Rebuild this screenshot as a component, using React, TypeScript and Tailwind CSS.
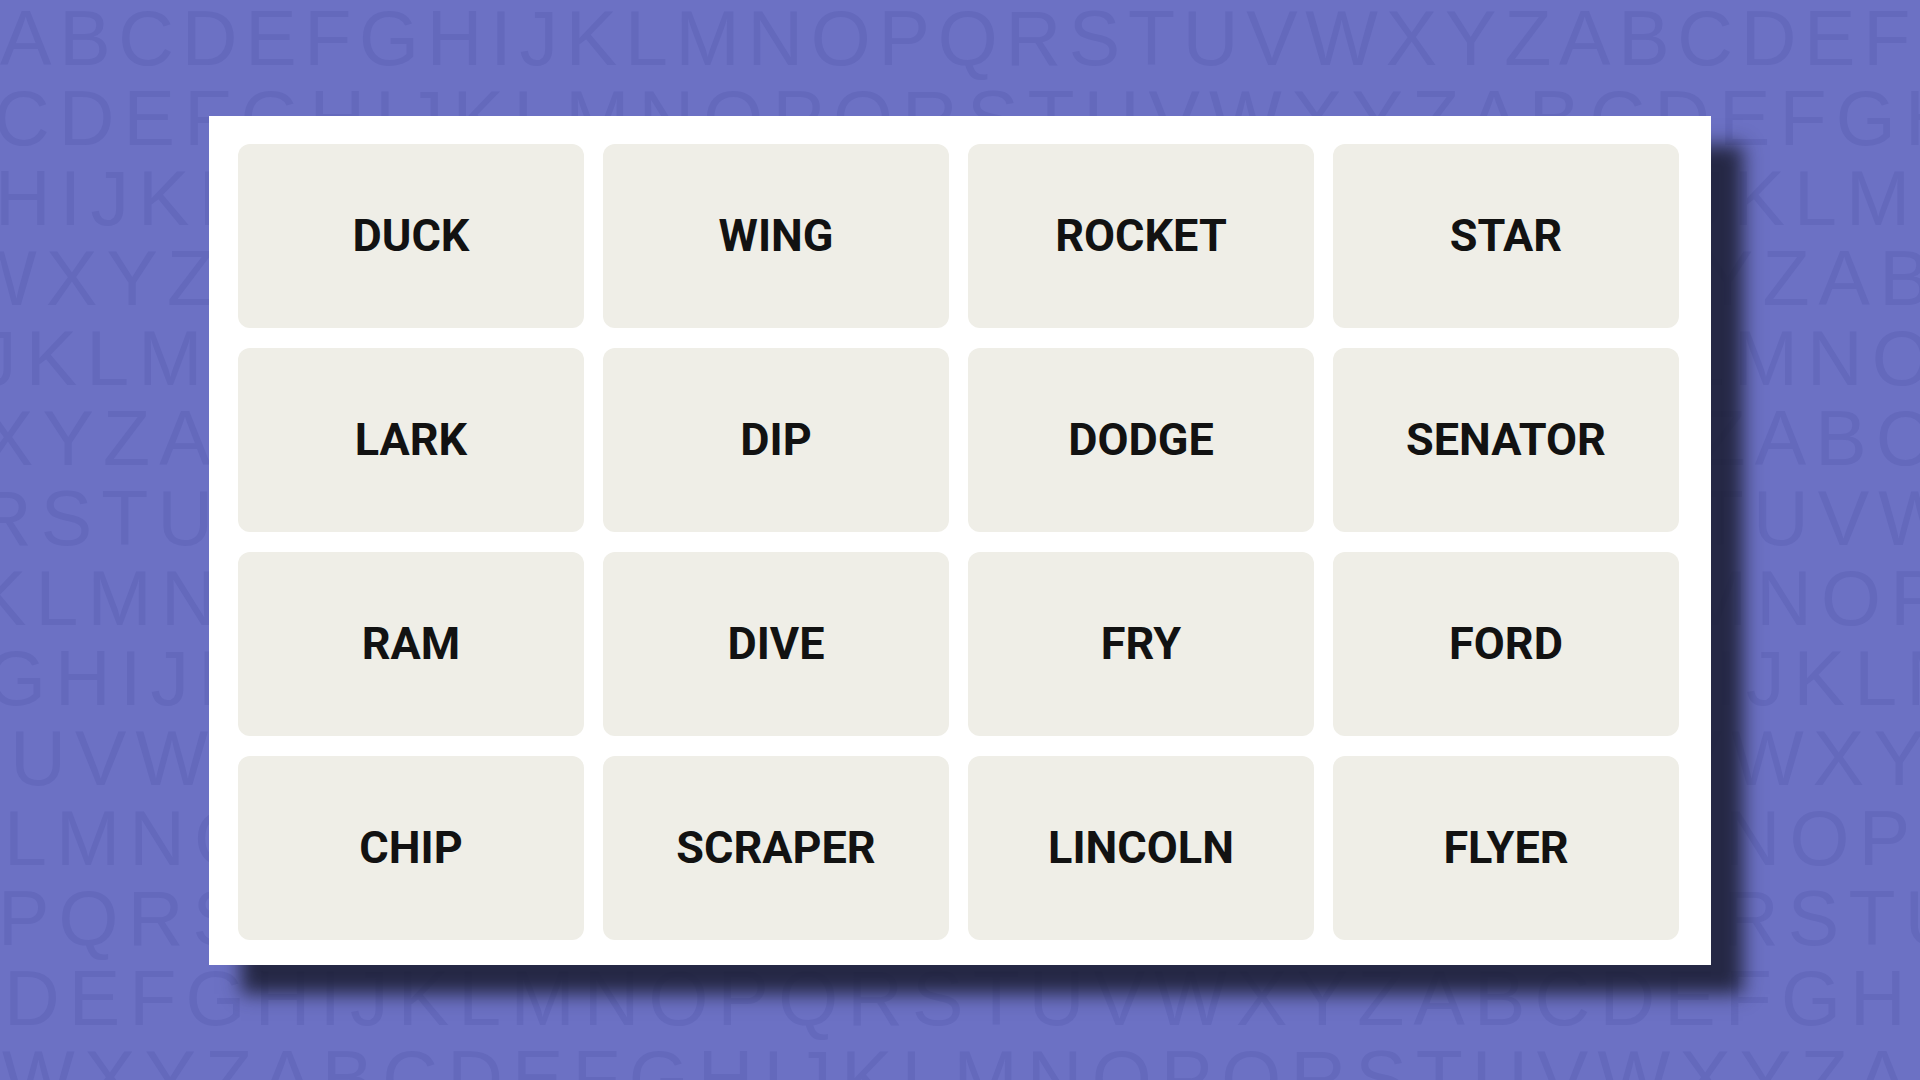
import React from "react";

const ALPHABET = "ABCDEFGHIJKLMNOPQRSTUVWXYZ";

// Background rows: starting letter and horizontal offset
const rows: { start: string; cls: string }[] = [
  { start: "A", cls: "ml-[0px] tracking-[7.8px]" },
  { start: "C", cls: "ml-[-6px] tracking-[9.2px]" },
  { start: "H", cls: "ml-[-5px] tracking-[9.2px]" },
  { start: "W", cls: "ml-[-36px] tracking-[9.2px]" },
  { start: "J", cls: "ml-[-22px] tracking-[9.2px]" },
  { start: "X", cls: "ml-[-18px] tracking-[9.2px]" },
  { start: "R", cls: "ml-[-24px] tracking-[9.2px]" },
  { start: "K", cls: "ml-[-25px] tracking-[9.2px]" },
  { start: "G", cls: "ml-[-14px] tracking-[9.2px]" },
  { start: "T", cls: "ml-[-46px] tracking-[9.2px]" },
  { start: "L", cls: "ml-[4px] tracking-[9.2px]" },
  { start: "P", cls: "ml-[-2px] tracking-[9.2px]" },
  { start: "D", cls: "ml-[4px] tracking-[9.2px]" },
  { start: "W", cls: "ml-[2px] tracking-[9.2px]" },
];

function sequence(start: string) {
  const i = ALPHABET.indexOf(start);
  const repeated = ALPHABET + ALPHABET + ALPHABET;
  return repeated.slice(i, i + 38);
}

const words = [
  "DUCK", "WING", "ROCKET", "STAR",
  "LARK", "DIP", "DODGE", "SENATOR",
  "RAM", "DIVE", "FRY", "FORD",
  "CHIP", "SCRAPER", "LINCOLN", "FLYER",
];

export default function App() {
  return (
    <div className="relative h-[1080px] w-[1920px] overflow-hidden bg-[#6c71c4]">
      {/* letter pattern backdrop */}
      <div className="absolute left-0 top-[-2px] flex w-full flex-col">
        {rows.map((r, idx) => (
          <div
            key={idx}
            className={`h-[80px] whitespace-nowrap text-[77px] leading-[80px] text-[#6469bc] [font-family:'Liberation_Sans',Arial,sans-serif] ${r.cls}`}
          >
            {sequence(r.start)}
          </div>
        ))}
      </div>

      {/* board */}
      <div className="relative flex h-full w-full items-center justify-center">
        <div className="h-[849px] w-[1502px] bg-white pb-[25px] pl-[29px] pr-[32px] pt-[28px] shadow-[32px_29px_18px_rgba(26,28,48,0.86)]">
          <div className="grid grid-cols-[repeat(4,346px)] grid-rows-[repeat(4,184px)] gap-x-[19px] gap-y-[20px]">
            {words.map((w) => (
              <div
                key={w}
                className="flex items-center justify-center rounded-[12px] bg-[#efeee7] text-[45px] font-bold text-[#121212] [font-family:Roboto,'Liberation_Sans',sans-serif]"
              >
                {w}
              </div>
            ))}
          </div>
        </div>
      </div>
    </div>
  );
}
